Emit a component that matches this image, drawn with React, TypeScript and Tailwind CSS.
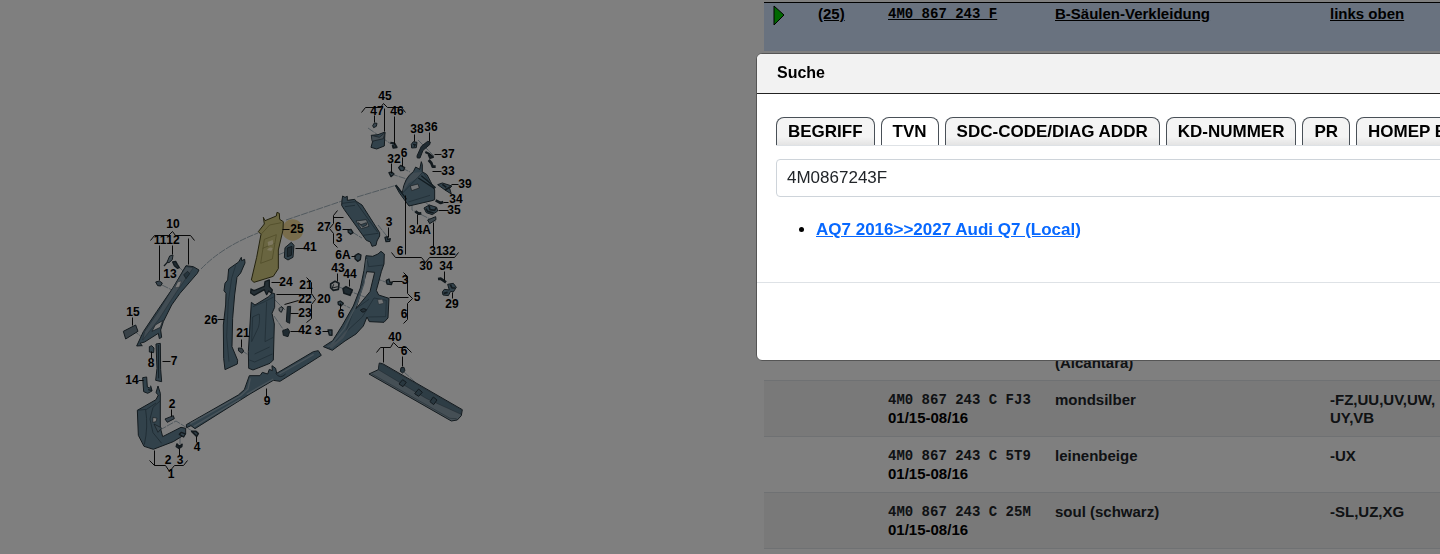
import { useState } from "react";

type Part = {
  no: string;
  date?: string;
  name: string;
  note: string;
};

const parts: Part[] = [
  { no: "4M0 867 243 C FJ3", date: "01/15-08/16", name: "mondsilber", note: "-FZ,UU,UV,UW, UY,VB" },
  { no: "4M0 867 243 C 5T9", date: "01/15-08/16", name: "leinenbeige", note: "-UX" },
  { no: "4M0 867 243 C 25M", date: "01/15-08/16", name: "soul (schwarz)", note: "-SL,UZ,XG" },
];

const tabs = ["BEGRIFF", "TVN", "SDC-CODE/DIAG ADDR", "KD-NUMMER", "PR", "HOMEP E"];

// callout number, centre x, centre y
const callouts: [string, number, number][] = [
  ["45", 385, 96], ["47", 377, 111], ["46", 397, 111], ["38", 417, 129], ["36", 431, 127],
  ["32", 394, 159], ["6", 404, 153], ["37", 448, 154], ["33", 448, 171], ["39", 465, 184],
  ["34", 456, 199], ["35", 454, 210], ["34A", 420, 230], ["3", 389, 222], ["6", 400, 251],
  ["31", 436, 251], ["32", 449, 251], ["30", 426, 266], ["34", 446, 266], ["29", 452, 304],
  ["27", 324, 227], ["6", 338, 227], ["3", 339, 238], ["6A", 343, 255], ["43", 338, 268],
  ["44", 350, 274], ["3", 405, 280], ["5", 417, 297], ["6", 404, 314], ["6", 341, 314],
  ["3", 318, 331], ["40", 395, 337], ["6", 404, 351], ["25", 297, 229], ["41", 310, 247],
  ["24", 286, 282], ["21", 306, 285], ["22", 305, 299], ["23", 305, 313], ["20", 324, 299],
  ["42", 305, 330], ["21", 243, 333], ["26", 211, 320], ["10", 173, 224], ["11", 160, 240],
  ["12", 173, 240], ["13", 170, 274], ["15", 133, 312], ["8", 151, 363], ["7", 174, 361],
  ["14", 132, 380], ["2", 172, 404], ["9", 267, 401], ["4", 197, 447], ["2", 168, 460],
  ["3", 180, 460], ["1", 171, 474],
];

function Diagram() {
  return (
    <svg viewBox="0 0 764 554" className="w-full" role="img" aria-label="Säulenverkleidung">
      {/* Assembly lines */}
      <g fill="none" stroke="#a3b3bd" strokeWidth="1" strokeDasharray="7 1">
        <path d="M201 269 Q222 247 258 233" />
        <path d="M286 220 L345 200 M357 197 L397 185" />
        <path d="M368 128 L391 144 M162 285 L172 290 M178 266 L186 274" />
        <path d="M391 174 L410 180 M402 168 L410 172 M418 140 L434 156 M412 180 L412 210 L436 222 M421 190 L421 200 L434 208" />
        <path d="M352 232 L362 238 M378 225 L390 240 M375 278 L388 283 M339 287 L380 303 M340 303 L350 308" />
        <path d="M275 300 L285 310 M274 316 L285 332 M241 350 L250 356 M278 255 L290 250" />
        <path d="M160 430 L176 421 L197 434 M133 330 L143 338 M404 372 L415 382 M180 444 L180 435" />
      </g>

      {/* A-pillar, strip 26 */}
      <g transform="translate(110 200) scale(.3333)" fill="#648496" stroke="#26343c" strokeWidth="3" strokeLinejoin="round">
        <path d="M228 197 L250 200 L267 210 L262 220 L210 280 L185 315 L160 365 L152 390 L155 412 L148 416 L145 400 L104 426 L90 430 L97 437 L80 438 L100 395 L140 335 L190 262Z" />
        <path d="M228 200 L250 203 L200 275 L145 360 L98 420 L104 395 L145 335Z" fill="#8298a7" strokeWidth="1" />
        <path d="M158 362 L151 382 L126 394 L136 375Z" fill="#fff" strokeWidth="2" />
        <path d="M203 246 L214 243 L208 261 L195 263Z" fill="#fff" strokeWidth="1" />
        <path d="M221 224 L233 214 L239 221 L228 236Z" fill="#4d6978" strokeWidth="2" />
        <path d="M394 172 L395 182 L404 178 L405 189 L392 219 L381 232 L374 285 L368 355 L366 440 L383 481 L382 492 L345 509 L341 475 L340 375 L347 315 L348 280 L342 272 L345 250 L353 240 L356 207 L386 186Z" />
        <path d="M377 196 L365 235 L355 305 L350 410 L357 485" fill="none" stroke="#3d5665" strokeWidth="2" />
        <path d="M40 394 L77 375 L84 394 L47 417Z" fill="#728490" />
        <path d="M171 187 L179 168 L189 165 L187 179 L177 188Z" fill="#8298a7" />
        <path d="M172 187 L162 198" fill="none" strokeWidth="4" />
        <path d="M188 186 L197 184 L202 193 L208 203 L202 205 L193 197Z" fill="#415763" strokeWidth="4" />
        <path d="M137 246 L148 243 L157 249 L152 258 L143 257Z" fill="#71899a" />
      </g>

      {/* Lower A-pillar and sill */}
      <g transform="translate(110 330) scale(.3333)" fill="#648496" stroke="#26343c" strokeWidth="3" strokeLinejoin="round">
        <path d="M138 42 L151 40 L152 118 L155 155 L137 151 L141 115Z" />
        <path d="M145 45 L146 145" fill="none" stroke="#263c49" />
        <path d="M118 50 L125 47 L132 54 L131 68 L118 66Z" />
        <path d="M98 143 L110 141 L112 171 L123 176 L126 183 L113 190 L101 185Z" />
        <path d="M122 167 L126 182 L114 179" fill="#4d6978" />
        <path d="M144 168 L151 190 L151 293 L158 320 L213 292 L227 295 L227 312 L190 335 L130 358 L102 349 L85 316 L82 241 L138 209 L145 195 L138 188Z" />
        <path d="M82 241 L110 238 L138 219 M107 240 Q115 290 103 344 M151 212 L129 232 L120 267 L129 308 L155 340" fill="none" stroke="#2f4653" strokeWidth="2" />
        <path d="M129 262 L141 265 L138 275 L128 277Z" fill="#fff" strokeWidth="2" />
        <path d="M132 282 L155 294 L144 307Z" fill="#718c9c" strokeWidth="2" />
        <path d="M165 267 L190 257 L193 266 L172 277Z" fill="#71899a" />
        <path d="M201 342 L208 350 L216 343 L215 350 L207 355 L199 350Z" strokeWidth="5" />
        <path d="M245 304 L258 304 L265 311 L260 319 L251 310Z" strokeWidth="5" />
        <path d="M208 313 L221 321 L226 312 L214 307Z" strokeWidth="4" />
        <path d="M229 284 L385 195 L403 179 L418 137 L450 137 L457 127 L473 132 L478 118 L487 122 L486 107 L497 115 L500 130 L610 65 L625 62 L634 76 L590 104 L510 154 L490 151 L420 192 L255 296 L243 287 L230 293Z" />
        <path d="M241 281 L392 197 L414 177 L421 145 M508 132 L611 73 M410 193 L490 147 M251 290 L391 207" fill="none" stroke="#93a8b5" strokeWidth="4" />
        <path d="M497 130 Q510 149 527 132" fill="none" strokeWidth="2" />
      </g>

      {/* B-pillar */}
      <g transform="translate(230 200) scale(.3333)" fill="#648496" stroke="#26343c" strokeWidth="3" strokeLinejoin="round">
        <circle cx="188" cy="90" r="32" fill="#f0d27e" fillOpacity=".8" stroke="none" />
        <path d="M100 52 L105 62 L139 48 L141 37 L148 40 L149 58 L160 65 L159 90 L145 150 L145 206 L130 229 L72 247 L64 240 L80 172 L93 103 L85 95 L103 72Z" fill="#d3cb80" stroke="#45421c" />
        <path d="M93 103 L119 75 L154 68 M103 118 L92 190 L127 177 L139 104Z M98 145 L134 130" fill="none" stroke="#958e49" strokeWidth="2" />
        <path d="M113 126 L128 120 L130 133 L115 138Z M111 150 Q120 139 128 145 L124 153Z" fill="#fff3c0" stroke="none" />
        <path d="M165 143 L184 127 L192 136 L189 172 L174 180 L163 173Z" />
        <path d="M172 144 L186 139 L184 166 L172 170Z" fill="#415763" />
        <path d="M63 267 L72 272 L103 259 L105 245 L118 240 L118 260 L127 270 L125 280 L116 273 L110 284 L103 269 L72 286 L62 279Z" fill="#4c616d" strokeWidth="4" />
        <path d="M64 307 L75 315 L116 290 L127 279 L134 281 L134 322 L126 340 L133 372 L130 480 L120 490 L69 510 L56 505 L55 455Z" />
        <path d="M69 320 L102 306 L131 291 M87 342 L68 351 L65 425 L81 391 Q91 375 88 342 M58 480 L74 486 L127 462 M110 305 L105 425 L130 412 M74 462 L119 441" fill="none" stroke="#3b5463" strokeWidth="2" />
        <path d="M147 326 L153 320 L160 324 L154 337 L148 333Z" fill="#b4bec5" />
        <path d="M172 320 L182 319 L179 370 L169 365Z" fill="#415763" />
        <path d="M158 392 L174 386 L179 395 L174 410 L160 406Z" fill="#415763" />
        <path d="M25 444 L36 445 L41 453 L36 460 L26 453Z" fill="#6d7e88" />
        <path d="M302 252 L315 244 L327 250 L325 268 L310 271 L302 263Z" fill="none" strokeWidth="5" />
        <path d="M311 253 L307 264 L323 260" fill="none" />
      </g>

      {/* Upper C-pillar and trim 27 */}
      <g transform="translate(340 170) scale(.3333)" fill="#648496" stroke="#26343c" strokeWidth="3" strokeLinejoin="round">
        <path d="M6 90 L8 78 L15 82 L22 79 L22 91 L44 88 L49 94 L66 105 L119 188 L119 198 L111 213 L108 226 L96 229 L91 216 L79 211 L13 119 L5 106Z" />
        <path d="M6 100 L47 95 L113 187 M15 110 L45 106 M70 196 L115 190" fill="none" stroke="#304956" strokeWidth="2" />
        <path d="M48 153 L79 149 L87 169 L64 176Z" fill="#dce4e9" strokeWidth="2" />
        <path d="M54 158 L63 164 L79 158 L80 165 L68 171Z" fill="#648496" strokeWidth="2" />
        <path d="M187 68 Q193 23 220 5 L227 -9 L239 -2 L244 -25 L247 -16 L247 5 L261 14 L272 35 L284 60 L284 89 L276 92 L207 108 L193 89 L179 70 L166 47 L170 46Z" />
        <path d="M188 66 Q196 28 220 8 L246 6 L232 24 L206 40Z" fill="#8298a7" stroke="none" />
        <path d="M188 69 L249 6 L277 52 M205 96 L270 76" fill="none" stroke="#3b5463" strokeWidth="2" />
        <path d="M235 24 L284 56 M244 17 L287 53 M168 47 L200 88" fill="none" stroke="#253943" strokeWidth="4" />
        <path d="M211 48 L234 42 L238 54 L215 62Z" fill="#e5ebef" strokeWidth="2" />
        <path d="M293 44 L307 39 L336 48 L329 55 L334 72 L315 60Z" />
        <path d="M307 43 L319 52 M315 60 L332 50" fill="none" strokeWidth="5" />
        <path d="M252 114 L268 105 L290 112 L293 123 L277 134 L259 128Z" />
        <path d="M267 107 L270 119 L284 121 L289 113 M258 116 L263 124 L281 129" fill="none" strokeWidth="5" />
        <path d="M287 91 L302 99 L310 96 M226 124 L236 131 L244 130 M266 -30 L274 -21 L278 -10 L287 -10" fill="none" strokeWidth="8" />
        <path d="M263 150 L287 140 L288 149 L269 161Z" fill="#768c99" />
        <path d="M135 202 L142 200 L143 209 L151 206 L149 214 L138 215Z M24 180 L33 178 L39 188 L32 193 L25 187Z M45 257 L55 251 L63 255 L61 269 L53 274 L45 266Z" strokeWidth="4" />
        <path d="M294 327 L302 326 L318 337" fill="none" strokeWidth="8" />
        <path d="M307 366 L313 358 L328 360 L323 343 L340 340 L349 352 L340 366 L332 364 L325 377 L309 375Z" />
        <path d="M331 344 L336 354 L346 354 M311 370 L323 367" fill="none" strokeWidth="5" />
      </g>

      {/* Small parts around 45 and 38 */}
      <g transform="translate(340 80) scale(.3333)" fill="#648496" stroke="#26343c" strokeWidth="3" strokeLinejoin="round">
        <path d="M94 166 L114 164 L135 156 L133 198 L110 207 L93 202 L98 184Z" />
        <path d="M94 166 L118 172 L135 158 L130 176 L96 184Z" fill="#879aa6" strokeWidth="2" />
        <path d="M98 137 L103 129 L111 130 L109 139 L101 143Z" fill="#71899a" />
        <path d="M151 188 L163 190 L170 202 L160 203 L158 195" strokeWidth="6" />
        <path d="M214 193 L220 185 L231 187 L229 203 L215 204Z" />
        <path d="M219 193 L226 194 L222 200" fill="none" strokeWidth="4" />
        <path d="M231 228 L244 199 L263 184 L271 186 L269 194 L249 211 L240 234 L232 234Z" fill="#415763" />
        <path d="M256 216 L268 222 L279 231 L270 234 L266 224" strokeWidth="6" />
        <path d="M176 263 L182 256 L194 263 L191 271 L182 272Z M147 278 L155 276 L162 282 L153 290Z" strokeWidth="4" />
      </g>

      {/* Lower C/D-pillar */}
      <g transform="translate(320 240) scale(.3333)" fill="#648496" stroke="#26343c" strokeWidth="3" strokeLinejoin="round">
        <path fillRule="evenodd" d="M138 47 L158 49 L174 42 L183 34 L193 42 L192 72 L184 95 L176 126 L169 151 L176 165 L207 175 L204 234 L192 247 L148 245 L141 231 L130 258 L108 282 L75 303 L37 331 L10 320 L38 302 L67 256 L100 198 L121 144 L132 91Z M140 95 L164 97 L150 155 L108 206 L126 145Z" />
        <path d="M140 53 L146 80 L190 75 M105 201 L77 277 L127 231 L162 174 L199 181 L197 230 L145 231 M90 265 L26 325 M109 205 L147 178 M25 318 L55 305" fill="none" stroke="#3b5463" strokeWidth="2" />
        <path d="M140 57 L132 130 L111 191 L73 266 L33 315" fill="none" stroke="#8ba3b1" strokeWidth="4" />
        <path d="M82 268 L96 250 L70 294 L36 325 L20 319 L50 303Z" fill="#8298a7" stroke="none" />
        <path d="M173 179 L187 178 L191 190 L176 193Z" fill="#e5ebef" strokeWidth="1" />
        <path d="M121 210 Q130 202 140 209 Q134 219 126 216Z" fill="#48616f" />
        <path d="M69 146 L78 140 L97 150 L90 166 L72 160Z" fill="#415763" strokeWidth="5" />
        <path d="M54 186 L61 183 L70 190 L63 198 L55 193Z M24 270 L36 270 L36 286 L28 285Z M199 121 L207 117 L210 128 L217 126 L214 134 L201 132Z" strokeWidth="4" />
      </g>

      {/* Rail 40 */}
      <g transform="translate(260 330) scale(.3333)" fill="#8b9eaa" stroke="#26343c" strokeWidth="3" strokeLinejoin="round">
        <path d="M358 99 L368 101 L607 239 L604 257 L592 270 L574 273 L327 132 L355 119Z" />
        <path d="M358 101 L367 103 L605 240 L603 253 L500 206 L355 119Z" fill="#5d7a8b" strokeWidth="1" />
        <path d="M336 132 L570 265 L590 266" fill="none" stroke="#4b626f" strokeWidth="2" />
        <path d="M417 162 L428 149 L439 157 L429 170Z M464 191 L476 177 L487 187 L476 199Z M510 215 L520 201 L531 210 L521 224Z" fill="#526e7e" />
        <path d="M423 113 L432 112 L435 122 L428 129 L421 124Z" fill="#526e7e" />
      </g>

      {/* Brackets and leaders */}
      <g transform="translate(.5 .5)" fill="none" stroke="#111" strokeWidth="1">
        <path d="M361 112 L365 107 H380 L383 103 L387 107 H401 L405 112 M374 115 V122 M384 108 V131 M394 116 V144" />
        <path d="M150 240 L154 235 H168 L172 231 L175 235 H190 L194 240 M159 245 V280 M172 245 V254 M188 238 V264" />
        <path d="M391 252 L395 257 H421 L425 262 L429 257 H454 L458 252 M405 195 V254 M433 222 V246" />
        <path d="M403 272 L407 276 V293 L412 298 L407 303 V319 L403 323 M389 297 H408" />
        <path d="M337 210 L333 215 V223 L329 228 L333 233 V243 L337 247 M333 217 H343" />
        <path d="M306 277 L311 282 V293 L315 299 L311 304 V318 L306 322 M276 294 H311" />
        <path d="M376 352 L380 347 H390 L393 342 L398 347 H406 L411 352 M383 347 V362 M402 356 V366" />
        <path d="M149 460 L154 465 H165 L169 471 L174 465 H183 L187 460 M154 450 V465" />
        <path d="M414 134 V141 M429 132 V141 M391 163 V173 M402 157 V166 M434 154 H441 M432 171 H441 M451 184 H458 M443 202 H448 M438 210 H448 M417 214 V224 M388 227 V237 M444 271 V280 M452 292 V298" />
        <path d="M342 229 H349 M351 256 H355 M337 273 V281 M349 279 V286 M392 281 H402 M340 303 V309 M322 331 H328 M282 229 H289 M295 248 H304 M271 282 H280 M284 304 L298 300 M290 313 H298 M290 331 H299" />
        <path d="M241 339 V347 M217 319 H224 M132 317 V325 M151 351 V358 M162 361 H170 M138 380 H143 M171 409 V416 M266 388 V396 M196 436 V442 M179 448 V455" />
      </g>
      <g className="text-[12px] font-bold" textAnchor="middle">
        {callouts.map(([label, x, y]) => (
          <text key={`${label}-${x}-${y}`} x={x} y={y + 4}>
            {label}
          </text>
        ))}
      </g>
    </svg>
  );
}

function PartsTable() {
  return (
    <table className="w-full table-fixed border-collapse text-left align-top text-[15px] font-bold leading-[18px]">
      <colgroup>
        <col className="w-[54px]" />
        <col className="w-[70px]" />
        <col className="w-[167px]" />
        <col className="w-[275px]" />
        <col />
      </colgroup>
      <tbody>
        <tr className="h-12 border-t border-black bg-[#d2e4fe] align-top text-black underline">
          <td className="pl-[9px] pt-[2px]">
            <svg width="12" height="22" viewBox="0 0 12 22" aria-hidden="true">
              <path d="M1 1 L11 10 L1 20Z" fill="#00d000" stroke="#000" />
            </svg>
          </td>
          <td className="pt-[2px]">
            <a href="#25">(25)</a>
          </td>
          <td className="pt-[2px] font-['Liberation_Mono',monospace] text-[14px]">
            <a href="#25">4M0 867 243 F</a>
          </td>
          <td className="pt-[2px]">
            <a href="#25">B-Säulen-Verkleidung</a>
          </td>
          <td className="pt-[2px]">
            <a href="#25">links oben</a>
          </td>
        </tr>
        <tr className="h-[330px] align-bottom">
          <td />
          <td />
          <td />
          <td className="pb-2">(Alcantara)</td>
          <td />
        </tr>
        {parts.map((part) => (
          <tr key={part.no} className="h-14 border-t border-[#dee2e6] align-top odd:bg-[#f2f2f2]">
            <td />
            <td />
            <td className="pt-[10px]">
              <div className="font-['Liberation_Mono',monospace] text-[14px]">{part.no}</div>
              <div className="text-black">{part.date}</div>
            </td>
            <td className="pt-[10px]">{part.name}</td>
            <td className="pt-[10px]">{part.note}</td>
          </tr>
        ))}
        <tr className="h-14 border-t border-[#dee2e6]">
          <td colSpan={5} />
        </tr>
      </tbody>
    </table>
  );
}

function SearchDialog() {
  const [active, setActive] = useState("TVN");
  const [query, setQuery] = useState("4M0867243F");

  return (
    <div
      role="dialog"
      aria-labelledby="search-title"
      className="w-[800px] shrink-0 overflow-hidden rounded-md border border-[#555] bg-white text-[17px] text-black"
    >
      <h2 id="search-title" className="border-b border-[#222] bg-[#f2f2f2] px-5 pt-[7px] pb-2 text-[16px] font-bold leading-6">
        Suche
      </h2>
      <div className="px-[19px] pt-[23px] pb-10">
        <div role="tablist" className="flex gap-[6px] border-b border-[#dee2e6]">
          {tabs.map((tab) => (
            <button
              key={tab}
              type="button"
              role="tab"
              aria-selected={tab === active}
              onClick={() => setActive(tab)}
              className={`h-7 shrink-0 whitespace-nowrap rounded-t-lg border border-b-0 border-[#495057] px-[11px] font-bold leading-6 ${
                tab === active ? "bg-white" : "bg-linear-to-b from-[#f4f4f4] from-70% to-[#e4e4e4]"
              }`}
            >
              {tab}
            </button>
          ))}
        </div>
        <input
          type="text"
          aria-label="TVN"
          value={query}
          onChange={(e) => setQuery(e.target.value)}
          className="mt-[13px] h-[38px] w-full rounded border border-[#ced4da] px-[10px] text-[#212529]"
        />
        <ul className="mt-[21px] list-disc pl-10 font-bold leading-6">
          <li>
            <a href="#q7" className="text-[#0768ff] underline">
              AQ7 2016&gt;&gt;2027 Audi Q7 (Local)
            </a>
          </li>
        </ul>
      </div>
      <div className="h-[78px] border-t border-[#dee2e6]" />
    </div>
  );
}

export default function App() {
  return (
    <div className="h-screen overflow-hidden bg-white font-['Liberation_Sans',Arial,sans-serif] text-[#212529]">
      <div className="grid grid-cols-[191fr_169fr]">
        <Diagram />
        <div className="pt-[2px]">
          <PartsTable />
        </div>
      </div>

      {/* Backdrop */}
      <div className="fixed inset-0 flex items-start overflow-hidden bg-black/50 pt-[53px] pl-[52.5%]">
        <SearchDialog />
      </div>
    </div>
  );
}
